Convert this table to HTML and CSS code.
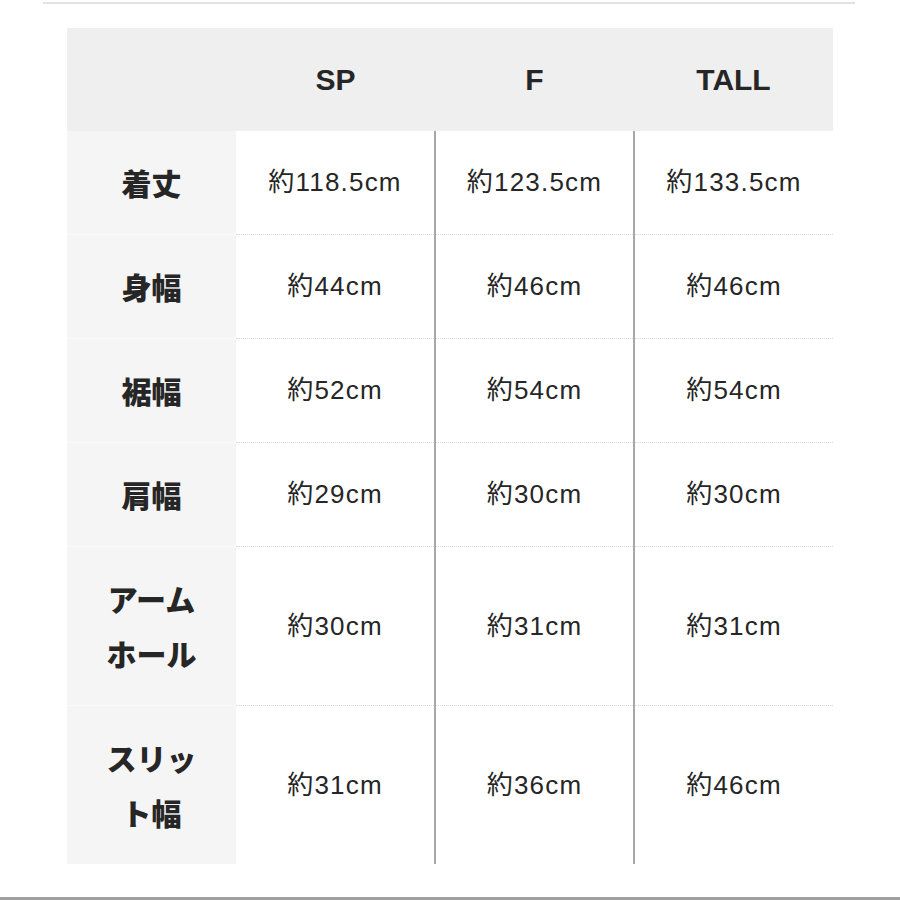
FILE: index.html
```html
<!DOCTYPE html>
<html lang="ja">
<head>
<meta charset="utf-8">
<link rel="stylesheet" href="styles.css">
</head>
<body>
<div class="rule-top"></div>
<table class="size-table">
  <colgroup>
    <col class="c-label">
    <col class="c-data">
    <col class="c-data">
    <col class="c-data">
  </colgroup>
  <thead>
    <tr>
      <th class="corner"></th>
      <th>SP</th>
      <th>F</th>
      <th>TALL</th>
    </tr>
  </thead>
  <tbody>
    <tr class="r1">
      <th class="label">着丈</th>
      <td>約118.5cm</td><td>約123.5cm</td><td>約133.5cm</td>
    </tr>
    <tr>
      <th class="label">身幅</th>
      <td>約44cm</td><td>約46cm</td><td>約46cm</td>
    </tr>
    <tr>
      <th class="label">裾幅</th>
      <td>約52cm</td><td>約54cm</td><td>約54cm</td>
    </tr>
    <tr>
      <th class="label">肩幅</th>
      <td>約29cm</td><td>約30cm</td><td>約30cm</td>
    </tr>
    <tr>
      <th class="label">アームホール</th>
      <td>約30cm</td><td>約31cm</td><td>約31cm</td>
    </tr>
    <tr class="last">
      <th class="label">スリット幅</th>
      <td>約31cm</td><td>約36cm</td><td>約46cm</td>
    </tr>
  </tbody>
</table>
<div class="rule-bottom"></div>
</body>
</html>
```

FILE: styles.css
```css
html, body {
  margin: 0;
  padding: 0;
  background: #ffffff;
  width: 900px;
  height: 900px;
  overflow: hidden;
}

body {
  font-family: "Liberation Sans", "Noto Sans CJK JP", sans-serif;
  color: #262626;
  position: relative;
}

.rule-top {
  height: 2px;
  margin: 2px 45px 0 43px;
  background: #e2e2e2;
}

.size-table {
  margin: 24px 0 0 67px;
  width: 765px;
  border-collapse: collapse;
  table-layout: fixed;
}

.c-label { width: 169px; }
.c-data { width: 199px; }

thead th {
  background: #efefef;
  height: 103px;
  padding: 0;
  font-family: "Liberation Sans", sans-serif;
  font-weight: bold;
  font-size: 30px;
  color: #262626;
  text-align: center;
  vertical-align: middle;
}

tbody th.label {
  background: #f5f5f5;
  font-family: "Noto Sans CJK JP", sans-serif;
  font-weight: 900;
  font-size: 30px;
  line-height: 55px;
  color: #262626;
  padding: 24px 34px;
  text-align: center;
  vertical-align: middle;
  border-bottom: 1px solid #f9f9f9;
}

tbody td {
  background: #ffffff;
  font-size: 26px;
  letter-spacing: 1.2px;
  line-height: 55px;
  padding: 24px 0;
  text-align: center;
  vertical-align: middle;
  border-bottom: 1px dotted #dadada;
}

tbody td + td {
  border-left: 2px solid #a8a8a8;
}

tbody tr.last td,
tbody tr.last th.label {
  border-bottom: none;
}

.rule-bottom {
  position: absolute;
  left: 0;
  right: 0;
  top: 897px;
  height: 3px;
  background: #a0a0a0;
}
```
